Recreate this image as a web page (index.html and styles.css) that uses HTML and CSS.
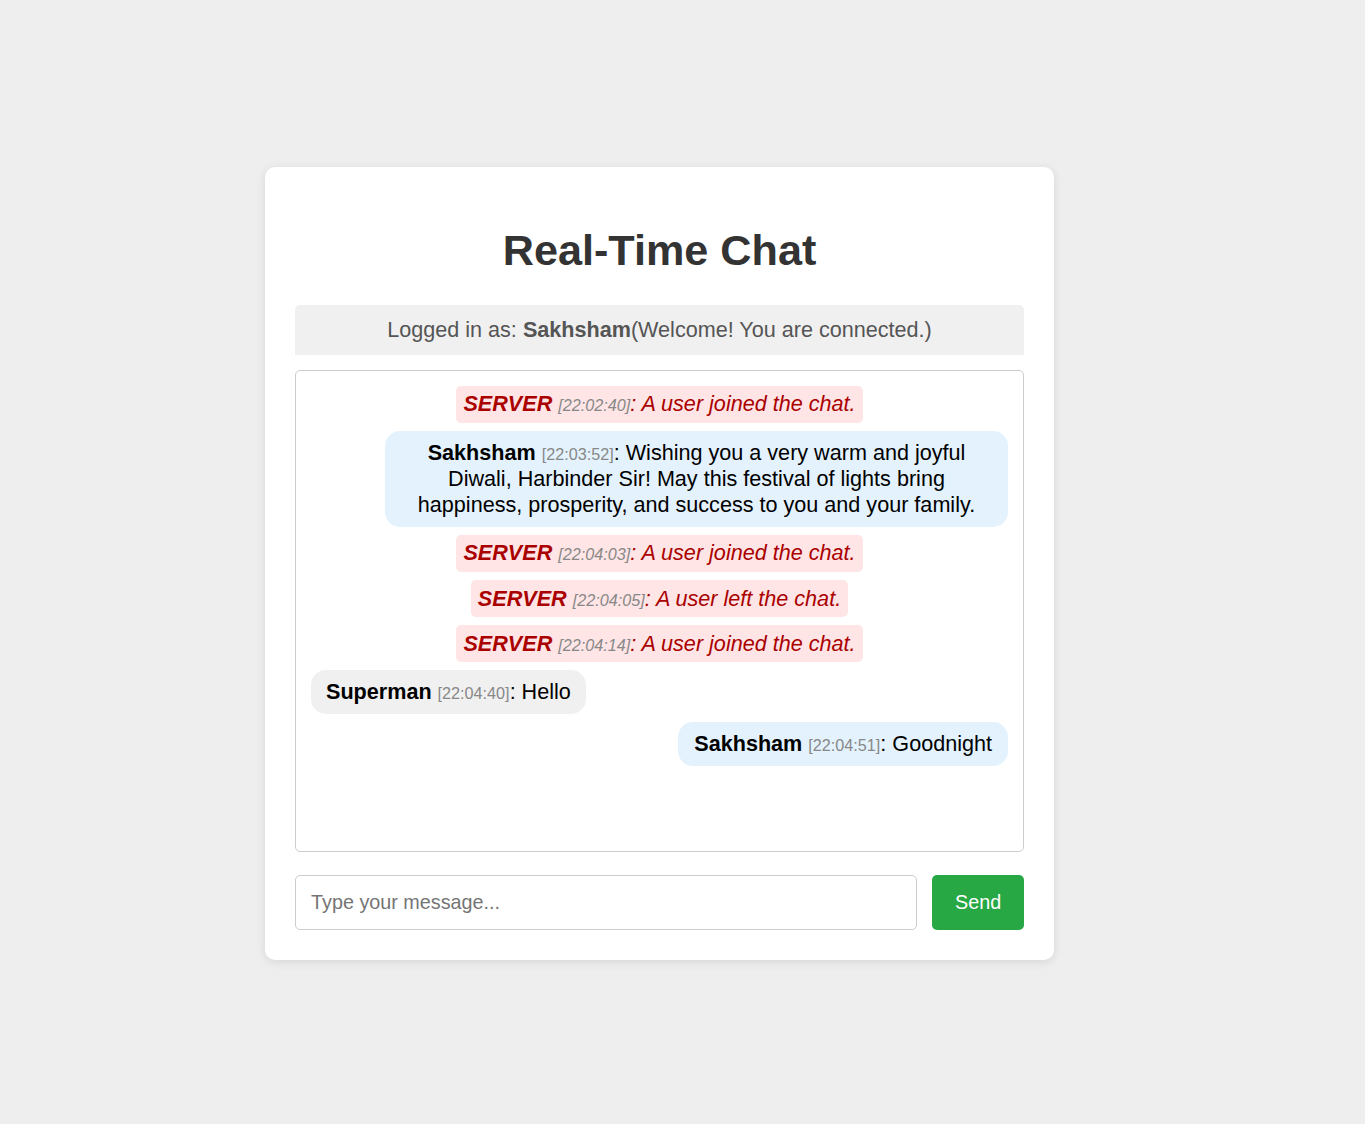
FILE: index.html
```html
<!DOCTYPE html>
<html lang="en">
<head>
<meta charset="utf-8">
<title>Real-Time Chat</title>
<link rel="stylesheet" href="styles.css">
</head>
<body>
<div class="card">
  <h1 class="title">Real-Time Chat</h1>
  <div class="status">Logged in as: <strong>Sakhsham</strong>(Welcome! You are connected.)</div>
  <div class="chat">
    <div class="msg server"><strong>SERVER</strong> <span class="time">[22:02:40]</span>: A user joined the chat.</div>
    <div class="msg own wide"><strong>Sakhsham</strong> <span class="time">[22:03:52]</span>: Wishing you a very warm and joyful Diwali, Harbinder Sir! May this festival of lights bring happiness, prosperity, and success to you and your family.</div>
    <div class="msg server"><strong>SERVER</strong> <span class="time">[22:04:03]</span>: A user joined the chat.</div>
    <div class="msg server"><strong>SERVER</strong> <span class="time">[22:04:05]</span>: A user left the chat.</div>
    <div class="msg server"><strong>SERVER</strong> <span class="time">[22:04:14]</span>: A user joined the chat.</div>
    <div class="msg other"><strong>Superman</strong> <span class="time">[22:04:40]</span>: Hello</div>
    <div class="msg own"><strong>Sakhsham</strong> <span class="time">[22:04:51]</span>: Goodnight</div>
  </div>
  <form class="composer">
    <input class="input" type="text" placeholder="Type your message...">
    <button class="send" type="button">Send</button>
  </form>
</div>
</body>
</html>
```
FILE: styles.css
```css
html, body {
  margin: 0;
  padding: 0;
}
body {
  background: #eeeeee;
  font-family: "Liberation Sans", Arial, sans-serif;
  font-size: 21.6px;
  padding: 167px 0 0 265px;
  min-height: 100vh;
  box-sizing: border-box;
}
.card {
  width: 789px;
  box-sizing: border-box;
  background: #ffffff;
  border-radius: 10px;
  box-shadow: 0 2px 10px rgba(0, 0, 0, 0.1);
  padding: 30px;
}
.title {
  font-size: 43.2px;
  font-weight: bold;
  color: #333333;
  text-align: center;
  margin: 29px 0;
  line-height: 49.7px;
}
.status {
  background: #f0f0f0;
  color: #555555;
  text-align: center;
  padding: 12.5px 10px;
  border-radius: 5px 5px 0 0;
  margin-bottom: 15px;
  line-height: 25px;
}
.chat {
  height: 482px;
  box-sizing: border-box;
  border: 1px solid #cccccc;
  border-radius: 5px;
  padding: 15px;
  display: flex;
  flex-direction: column;
  gap: 7.9px;
  overflow-y: auto;
  margin-bottom: 23px;
}
.msg {
  line-height: 26px;
  text-align: center;
  color: #000000;
}
.time {
  font-size: 16.2px;
  line-height: 16px;
  color: #888888;
}
.server {
  align-self: center;
  background: #ffe5e5;
  color: #aa0000;
  font-style: italic;
  padding: 5.6px 7px;
  border-radius: 5px;
}
.own {
  align-self: flex-end;
  background: #e3f2fd;
  padding: 9.1px 16px;
  border-radius: 15px;
  max-width: 623px;
  box-sizing: border-box;
}
.other {
  align-self: flex-start;
  background: #f0f0f0;
  padding: 9.1px 15px;
  border-radius: 15px;
  max-width: 623px;
  box-sizing: border-box;
}
.composer {
  display: flex;
  gap: 15px;
  margin: 0;
}
.input {
  flex: 1;
  height: 55px;
  box-sizing: border-box;
  border: 1px solid #cccccc;
  border-radius: 5px;
  padding: 0 15px;
  font-family: "Liberation Sans", Arial, sans-serif;
  font-size: 19.8px;
  color: #333333;
  outline: none;
}
.input::placeholder {
  color: #757575;
}
.send {
  height: 55px;
  border: none;
  border-radius: 5px;
  background: #28a745;
  color: #ffffff;
  font-family: "Liberation Sans", Arial, sans-serif;
  font-size: 19.8px;
  padding: 0 22.7px;
  cursor: pointer;
}
```
